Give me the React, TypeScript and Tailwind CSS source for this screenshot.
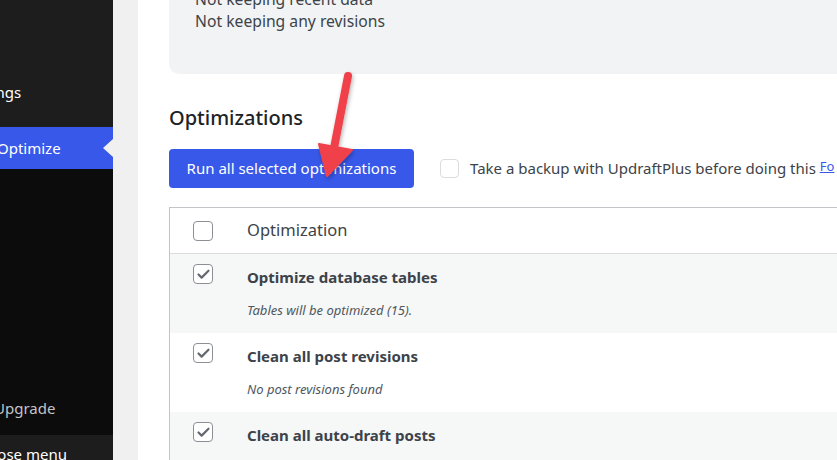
import { Check } from 'lucide-react'

const rows = [
  { title: 'Optimize database tables', note: 'Tables will be optimized (15).', shade: true },
  { title: 'Clean all post revisions', note: 'No post revisions found', shade: false },
  { title: 'Clean all auto-draft posts', note: '', shade: true },
]

function Box({ checked }: { checked?: boolean }) {
  return (
    <div className="w-[20px] h-[20px] rounded-[4px] border border-[#8c8f94] bg-white flex items-center justify-center">
      {checked && <Check size={15} strokeWidth={3.5} className="text-[#646970]" />}
    </div>
  )
}

export default function App() {
  return (
    <div className="relative w-[837px] h-[460px] overflow-hidden flex bg-[#f0f0f1] font-['Noto_Sans',sans-serif]">
      {/* admin menu */}
      <div className="w-[113px] h-full flex flex-col shrink-0 text-[15px]">
        <div className="h-[127px] shrink-0 bg-[#1d1d1d] flex flex-col justify-end pb-[27px]">
          <div className="text-white ml-[-36px] leading-none">Settings</div>
        </div>
        <div className="relative h-[42px] shrink-0 bg-[#3858e9] flex items-center">
          <span className="text-white ml-[-3px]">Optimize</span>
          <div className="absolute right-0 top-[12px] w-0 h-0 border-y-[9px] border-y-transparent border-r-[10px] border-r-[#f0f0f1]" />
        </div>
        <div className="h-[266px] shrink-0 bg-[#0c0c0c] flex flex-col justify-end pb-[19px]">
          <span className="text-[#c3c4c7] ml-[-6px] leading-none">Upgrade</span>
        </div>
        <div className="flex-1 bg-[#1d1d1d] pt-[12px]">
          <span className="text-white ml-[-16px] leading-none block whitespace-nowrap">Close menu</span>
        </div>
      </div>

      <div className="w-[25px] shrink-0" />

      {/* main */}
      <div className="flex-1 bg-white pl-[31px] flex flex-col">
        <div className="h-[86px] shrink-0 bg-[#f2f3f5] rounded-bl-[10px] pl-[26px] text-[15.7px] text-[#3c434a] leading-[22px] mt-[-12px]">
          <div>Not keeping recent data</div>
          <div>Not keeping any revisions</div>
        </div>

        <h2 className="shrink-0 mt-[30px] text-[20px] font-medium text-[#1d2327] leading-[28px]">Optimizations</h2>

        <div className="shrink-0 mt-[17px] flex items-center">
          <button className="h-[39px] w-[245px] rounded-[4px] bg-[#3858e9] text-white text-[15px]">
            Run all selected optimizations
          </button>
          <div className="ml-[26px] w-[19px] h-[19px] rounded-[4px] border border-[#dcdcde] bg-white" />
          <span className="ml-[11px] text-[15px] text-[#3c434a] whitespace-nowrap">
            Take a backup with UpdraftPlus before doing this{' '}
            <span className="text-[#3858e9] underline text-[13px] align-top">Fo</span>
          </span>
        </div>

        <div className="mt-[19px] border-l border-t border-[#c3c4c7] flex-1">
          <div className="h-[46px] flex items-center border-b border-[#dcdcde]">
            <div className="ml-[23px]"><Box /></div>
            <span className="ml-[34px] text-[16.5px] text-[#3c434a]">Optimization</span>
          </div>
          {rows.map((r) => (
            <div key={r.title} className={`h-[79px] flex ${r.shade ? 'bg-[#f6f7f7]' : 'bg-white'}`}>
              <div className="ml-[23px] mt-[10px]"><Box checked /></div>
              <div className="ml-[34px] mt-[12px]">
                <div className="text-[15px] font-bold text-[#3c434a] leading-[22px]">{r.title}</div>
                <div className="mt-[13px] text-[13px] italic text-[#50575e] leading-[18px]">{r.note}</div>
              </div>
            </div>
          ))}
        </div>
      </div>

      {/* annotation arrow */}
      <svg className="absolute left-0 top-0 pointer-events-none" width="837" height="460">
        <defs>
          <filter id="sh" x="-50%" y="-50%" width="200%" height="200%">
            <feDropShadow dx="1" dy="2" stdDeviation="2" floodColor="#000" floodOpacity="0.3" />
          </filter>
        </defs>
        <g filter="url(#sh)" fill="#f0404a" stroke="#f0404a">
          <line x1="348" y1="76" x2="334" y2="148" strokeWidth="8" strokeLinecap="round" />
          <polygon points="319,144 352,150 327,176" strokeWidth="2" strokeLinejoin="round" />
        </g>
      </svg>
    </div>
  )
}
